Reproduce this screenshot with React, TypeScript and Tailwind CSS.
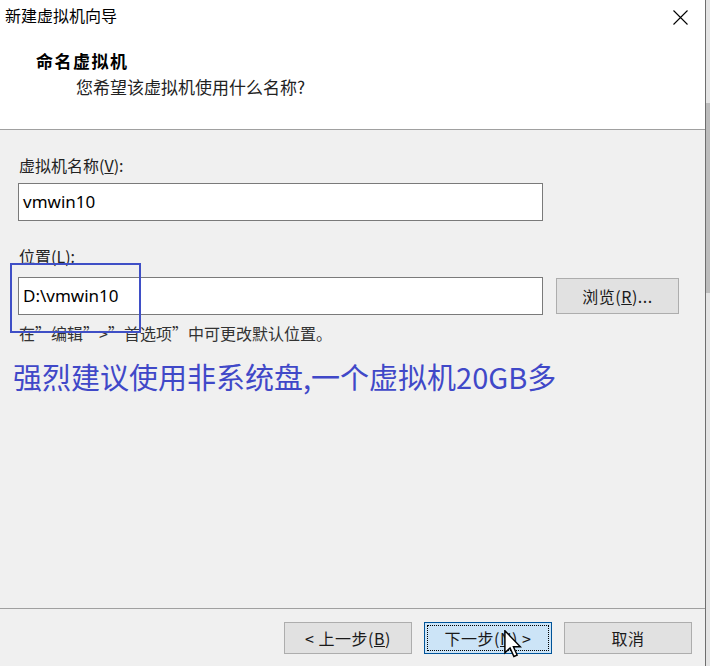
import React from "react";

const FONT = { fontFamily: '"Noto Sans CJK SC", "Noto Sans", sans-serif' };
const LATIN = { fontFamily: '"Noto Sans", "Noto Sans CJK SC", sans-serif' };

const WinButton = ({ children, focused }: { children: React.ReactNode; focused?: boolean }) => (
  <button
    className={
      "relative w-[128px] h-[32px] flex items-center justify-center text-[16px] tracking-[0.5px] text-[#1a1a1a] border " +
      (focused ? "bg-[#cce4f7] border-[#005499]" : "bg-[#e1e1e1] border-[#adadad]")
    }
  >
    {focused && <span className="absolute inset-[2px] border border-dotted border-black" />}
    {children}
  </button>
);

const Cursor = () => (
  <svg className="absolute left-[504px] top-[630px]" width="18" height="28" viewBox="0 0 12 19">
    <path
      d="M0.5 0.5 L0.5 15.5 L4 12.2 L6.6 18 L8.8 17 L6.3 11.4 L11 11.4 Z"
      fill="#fff"
      stroke="#000"
      strokeWidth="1"
      strokeLinejoin="miter"
    />
  </svg>
);

export default function App() {
  return (
    <div className="relative w-[710px] h-[666px] flex bg-[#f0f0f0] overflow-hidden" style={FONT}>
      <div className="w-[705px] h-full flex flex-col">
        {/* header */}
        <div className="h-[130px] bg-white border-b border-[#a0a0a0] relative">
          <div className="absolute left-[5px] top-[3px] text-[16px] leading-[24px] text-black">新建虚拟机向导</div>
          <svg className="absolute left-[673px] top-[10px]" width="15" height="15" viewBox="0 0 15 15">
            <path d="M0.5 0.5 L14.5 14.5 M14.5 0.5 L0.5 14.5" stroke="#000" strokeWidth="1.1" />
          </svg>
          <div className="pt-[50px] pl-[36px] text-[17px] leading-[22px] tracking-[1.5px] font-bold text-black">命名虚拟机</div>
          <div className="pl-[76px] pt-[4px] text-[17px] leading-[22px] text-[#222]">您希望该虚拟机使用什么名称?</div>
        </div>

        {/* body */}
        <div className="flex-1 flex flex-col pl-[18px]">
          <div className="mt-[23px] h-[24px] pl-[1px] text-[16px] leading-[24px] text-[#222]">
            虚拟机名称(<span className="underline">V</span>):
          </div>
          <div
            className="mt-[6px] w-[525px] h-[38px] bg-white border border-[#7a7a7a] pl-[4px] flex items-center text-[17px] text-black"
            style={LATIN}
          >
            vmwin10
          </div>
          <div className="mt-[23px] h-[24px] pl-[1px] text-[16px] leading-[24px] text-[#222]">
            位置(<span className="underline">L</span>):
          </div>
          <div className="mt-[9px] flex items-center gap-[13px]">
            <div
              className="w-[525px] h-[38px] bg-white border border-[#7a7a7a] pl-[4px] flex items-center text-[17px] text-black"
              style={LATIN}
            >
              D:\vmwin10
            </div>
            <button className="w-[123px] h-[36px] bg-[#e1e1e1] border border-[#adadad] text-[16px] tracking-[0.5px] text-[#1a1a1a]">
              浏览(<span className="underline">R</span>)...
            </button>
          </div>
          <div className="mt-[6px] h-[24px] pl-[1px] text-[16px] leading-[24px] text-[#333]">
            在”编辑”&gt;”首选项”中可更改默认位置。
          </div>
          <div className="mt-[11px] -ml-[5px] text-[29px] leading-[40px] text-[#4048c8]">
            强烈建议使用非系统盘,一个虚拟机20GB多
          </div>
        </div>

        {/* footer */}
        <div className="h-[58px] border-t border-[#a0a0a0] flex gap-[12px] pl-[284px] pt-[13px]">
          <WinButton>
            &lt; 上一步(<span className="underline">B</span>)
          </WinButton>
          <WinButton focused>
            下一步(<span className="underline">N</span>) &gt;
          </WinButton>
          <WinButton>取消</WinButton>
        </div>
      </div>

      {/* right edge / scrollbar strip */}
      <div className="w-[1px] h-full bg-[#6e6e6e]" />
      <div className="w-[4px] h-full bg-[#e4e4e4] flex flex-col">
        <div className="h-[103px] bg-[#e4e4e4]" />
        <div className="h-[190px] bg-[#bcbcbc]" />
      </div>

      {/* annotation rectangle */}
      <div className="absolute left-[10px] top-[263px] w-[131px] h-[70px] border-2 border-[#3f4fc6]" />
      <Cursor />
    </div>
  );
}
